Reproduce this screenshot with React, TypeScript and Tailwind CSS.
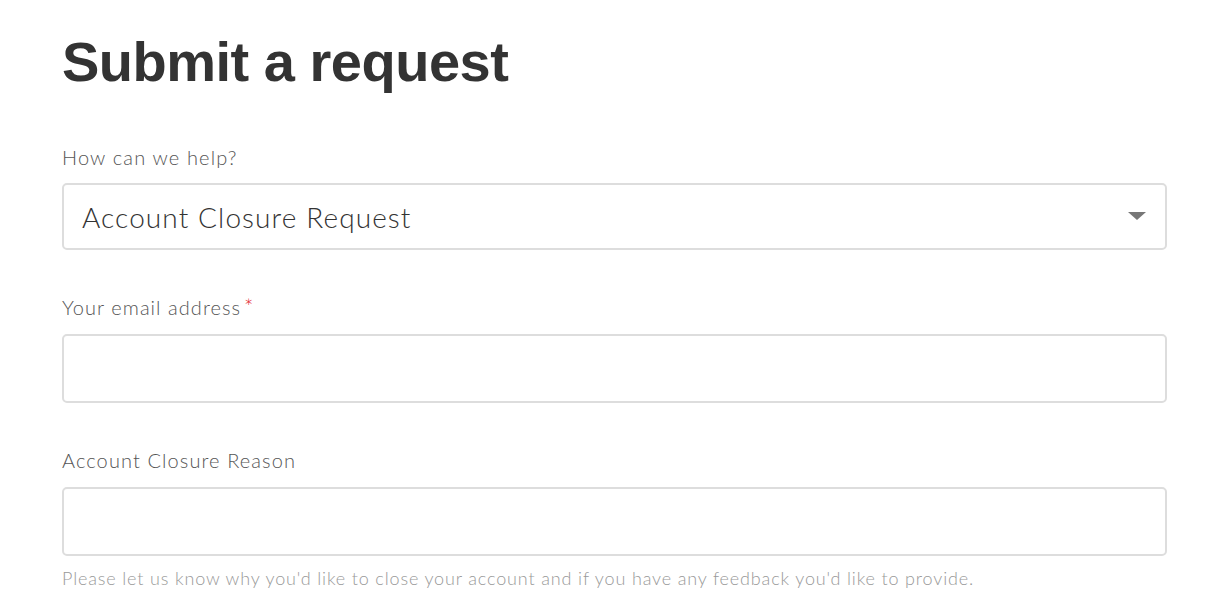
export default function App() {
  return (
    <div className="min-h-screen bg-white px-[62px] pt-[22px]" style={{ fontFamily: 'Lato, "Open Sans", sans-serif' }}>
      <h1 className="text-[56px] font-bold leading-[80px] tracking-[-0.5px] text-[#333]" style={{ fontFamily: '"Liberation Sans", Arial, sans-serif' }}>
        Submit a request
      </h1>

      <form className="mt-[41px] w-[1105px]">
        <div>
          <label className="block text-[20px] font-light leading-[28px] tracking-[1.15px] text-[#555]">How can we help?</label>
          <div className="relative mt-[12px] flex h-[67px] items-center rounded-[5px] border-2 border-[#ddd] px-[18px]">
            <span className="text-[28px] font-light tracking-[1.1px] text-[#333]">Account Closure Request</span>
            <svg className="absolute right-[19px] top-[27px]" width="18" height="8" viewBox="0 0 18 8">
              <path d="M0 0h18L9 8z" fill="#777" />
            </svg>
          </div>
        </div>

        <div className="mt-[43px]">
          <label className="block text-[20px] font-light leading-[28px] tracking-[1.05px] text-[#555]">
            Your email address<span className="ml-[3px] text-[22px] tracking-normal text-[#e3262e]">*</span>
          </label>
          <div className="mt-[13px] h-[69px] rounded-[5px] border-2 border-[#ddd]" />
        </div>

        <div className="mt-[43px]">
          <label className="block text-[20px] font-light leading-[28px] tracking-[1.1px] text-[#555]">Account Closure Reason</label>
          <div className="mt-[13px] h-[69px] rounded-[5px] border-2 border-[#ddd]" />
          <p className="mt-[9px] text-[18px] font-light leading-[26px] tracking-[0.85px] text-[#999]">
            Please let us know why you'd like to close your account and if you have any feedback you'd like to provide.
          </p>
        </div>
      </form>
    </div>
  );
}
